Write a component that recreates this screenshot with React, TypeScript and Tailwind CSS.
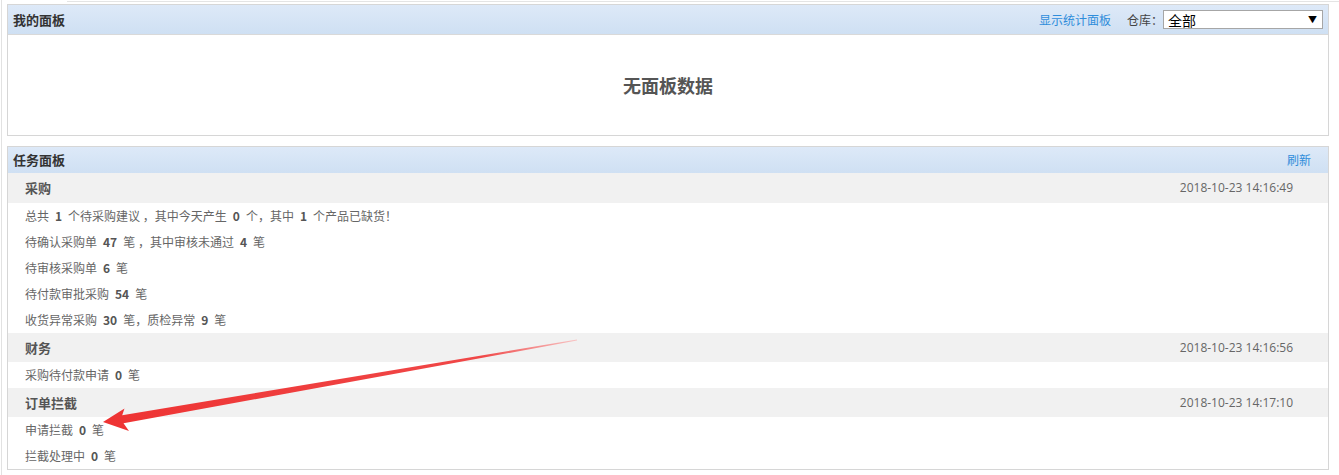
import React from 'react';

// task panel data
const SECTIONS = [
  {
    title: '采购',
    time: '2018-10-23 14:16:49',
    rows: [
      ['总共', '1', '个待采购建议 ，其中今天产生', '0', '个，其中', '1', '个产品已缺货！'],
      ['待确认采购单', '47', '笔 ，其中审核未通过', '4', '笔'],
      ['待审核采购单', '6', '笔'],
      ['待付款审批采购', '54', '笔'],
      ['收货异常采购', '30', '笔，质检异常', '9', '笔'],
    ],
  },
  {
    title: '财务',
    time: '2018-10-23 14:16:56',
    rows: [['采购待付款申请', '0', '笔']],
  },
  {
    title: '订单拦截',
    time: '2018-10-23 14:17:10',
    rows: [
      ['申请拦截', '0', '笔'],
      ['拦截处理中', '0', '笔'],
    ],
  },
];

const Arrow: React.FC = () => (
  <svg className="absolute left-0 top-0 pointer-events-none" width="1339" height="475" viewBox="0 0 1339 475">
    <defs>
      <linearGradient id="arrowFade" x1="577" y1="340" x2="103" y2="422" gradientUnits="userSpaceOnUse">
        <stop offset="0" stopColor="#f8c4c4" />
        <stop offset="0.2" stopColor="#f04848" />
        <stop offset="1" stopColor="#ee3333" />
      </linearGradient>
    </defs>
    <polygon
      points="577,339.6 577,340.6 123.5,423.2 129,431 103,422 124.5,408.5 122.2,415.3"
      fill="url(#arrowFade)"
    />
  </svg>
);

const App: React.FC = () => {
  return (
    <div className="relative w-[1339px] h-[475px] bg-white overflow-hidden font-['Noto_Sans_CJK_SC',sans-serif]">
      <div className="ml-px h-full border-l border-[#e2e2e2] flex flex-col">
        <div className="mt-px h-px ml-[65px] bg-[#e4e4e4]" />

        {/* 我的面板 */}
        <div className="mt-[2px] ml-[5px] mr-[10px] border border-[#d6d6d6]">
          <div className="h-[30px] flex items-center justify-between pl-[5px] pr-[5px] border-b border-[#d9d9d9] bg-gradient-to-b from-[#dde9f8] to-[#cfe0f3]">
            <span className="text-[13px] font-bold text-[#333]">我的面板</span>
            <div className="flex items-center whitespace-nowrap">
              <span className="text-[12px] text-[#2f8ddb] mr-[16px]">显示统计面板</span>
              <span className="text-[12px] text-[#444]">仓库：</span>
              <div className="shrink-0 w-[160px] h-[19px] bg-white border border-[#a6a6a6] flex items-center justify-between pl-[4px] pr-[5px]">
                <span className="text-[14px] leading-none text-black">全部</span>
                <span className="text-[9px] leading-none text-black">▼</span>
              </div>
            </div>
          </div>
          <div className="h-[100px] flex items-center justify-center">
            <span className="text-[18px] font-bold text-[#555]">无面板数据</span>
          </div>
        </div>

        {/* 任务面板 */}
        <div className="mt-[10px] ml-[5px] mr-[10px] border border-[#d6d6d6]">
          <div className="h-[26px] flex items-center justify-between pl-[5px] pr-[17px] bg-gradient-to-b from-[#dde9f8] to-[#cfe0f3]">
            <span className="text-[13px] font-bold text-[#333]">任务面板</span>
            <span className="text-[12px] text-[#2f8ddb]">刷新</span>
          </div>
          {SECTIONS.map((sec, i) => (
            <div key={sec.title}>
              <div className={`${i === 0 ? 'h-[30px]' : 'h-[29px]'} flex items-center justify-between pl-[17px] pr-[35px] bg-[#f1f1f1]`}>
                <span className="text-[13px] font-bold text-[#555]">{sec.title}</span>
                <span className="text-[12px] text-[#666] font-['Open_Sans',sans-serif]">{sec.time}</span>
              </div>
              {sec.rows.map((row, r) => (
                <div key={r} className="h-[26px] flex items-center pl-[17px] text-[12px] text-[#666] whitespace-pre">
                  {row.map((part, p) =>
                    p % 2 === 1 ? (
                      <b key={p} className="font-bold text-[#555] px-[6px]">{part}</b>
                    ) : (
                      <span key={p}>{part}</span>
                    )
                  )}
                </div>
              ))}
            </div>
          ))}
        </div>
      </div>
      <Arrow />
    </div>
  );
};

export default App;
